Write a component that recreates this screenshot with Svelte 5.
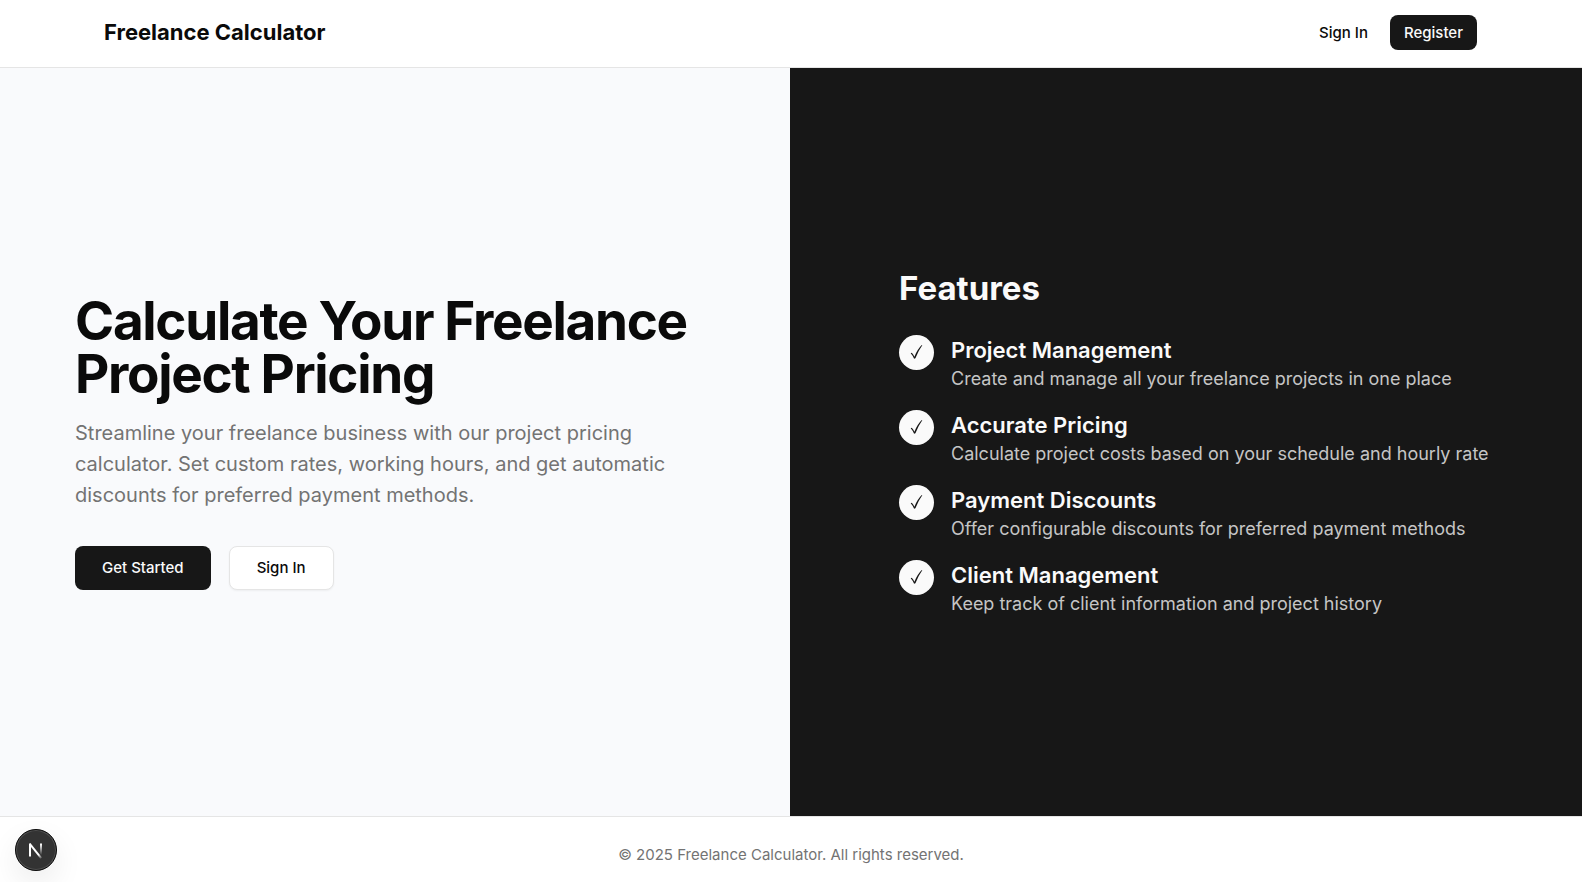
<script>
  const features = [
    { title: 'Project Management', text: 'Create and manage all your freelance projects in one place' },
    { title: 'Accurate Pricing', text: 'Calculate project costs based on your schedule and hourly rate' },
    { title: 'Payment Discounts', text: 'Offer configurable discounts for preferred payment methods' },
    { title: 'Client Management', text: 'Keep track of client information and project history' }
  ];
</script>

<div class="page">
  <header>
    <div class="bar">
      <a class="brand" href="#home">Freelance Calculator</a>
      <nav>
        <a class="btn" href="#signin">Sign In</a>
        <a class="btn primary" href="#register">Register</a>
      </nav>
    </div>
  </header>

  <main>
    <section class="hero">
      <div class="intro">
        <h1>Calculate Your Freelance Project Pricing</h1>
        <p>
          Streamline your freelance business with our project pricing calculator. Set custom rates,
          working hours, and get automatic discounts for preferred payment methods.
        </p>
        <div class="actions">
          <a class="btn large primary" href="#register">Get Started</a>
          <a class="btn large outline" href="#signin">Sign In</a>
        </div>
      </div>
    </section>

    <section class="features">
      <div class="panel">
        <h2>Features</h2>
        <ul>
          {#each features as feature}
            <li>
              <span class="check">
                <svg viewBox="0 0 14 16" aria-hidden="true">
                  <path d="M0.7 9.3 L1.8 8.8 Q3.6 10.6 4.4 12.7 Q7.4 5.2 11.8 1 L12.3 1.3 Q8.4 6.7 5.4 14.3 L4.1 14.8 Q2.8 11.6 0.7 9.3 Z" />
                </svg>
              </span>
              <div>
                <h3>{feature.title}</h3>
                <p>{feature.text}</p>
              </div>
            </li>
          {/each}
        </ul>
      </div>
    </section>
  </main>

  <footer>
    <p>© 2025 Freelance Calculator. All rights reserved.</p>
  </footer>

  <button class="devtools" aria-label="Open Next.js Dev Tools">
    <svg viewBox="0 0 40 40" aria-hidden="true">
      <defs>
        <linearGradient id="diagonal" gradientUnits="userSpaceOnUse" x1="19" y1="20" x2="26" y2="29">
          <stop offset="0.5" stop-color="#fff" />
          <stop offset="1" stop-color="#fff" stop-opacity="0" />
        </linearGradient>
        <linearGradient id="stem" gradientUnits="userSpaceOnUse" x1="25" y1="14" x2="25" y2="25">
          <stop offset="0" stop-color="#fff" />
          <stop offset="1" stop-color="#fff" stop-opacity="0" />
        </linearGradient>
      </defs>
      <path d="M13.8 13.8 L25.2 28.2" fill="none" stroke="url(#diagonal)" stroke-width="2" />
      <path d="M14 26.5 V13.5" fill="none" stroke="#fff" stroke-width="2" />
      <path d="M25 13.5 V25.5" fill="none" stroke="url(#stem)" stroke-width="2" />
    </svg>
  </button>
</div>

<style>
  :global(body) {
    margin: 0;
    background: #fff;
  }

  .page {
    display: flex;
    flex-direction: column;
    min-height: 100vh;
    font-family: Inter, sans-serif;
    color: #0a0a0a;
  }

  h1, h2, h3, p, ul {
    margin: 0;
    padding: 0;
  }

  a {
    color: inherit;
    text-decoration: none;
  }

  header {
    border-bottom: 1px solid #e5e5e5;
  }

  .bar {
    display: flex;
    align-items: center;
    justify-content: space-between;
    box-sizing: border-box;
    max-width: 1408px;
    margin: 0 auto;
    padding: 15px 18px 17px 17px;
  }

  .brand {
    font-size: 22px;
    line-height: 31px;
    font-weight: 700;
  }

  nav {
    display: flex;
    gap: 8px;
  }

  .btn {
    display: flex;
    align-items: center;
    box-sizing: border-box;
    height: 35px;
    padding: 0 14px;
    border-radius: 8px;
    font-size: 15px;
    line-height: 22px;
    font-weight: 500;
    white-space: nowrap;
  }

  .large {
    height: 44px;
    padding: 0 27px;
  }

  .primary {
    background: #171717;
    color: #fafafa;
  }

  .outline {
    border: 1px solid #e5e5e5;
    background: #fff;
    box-shadow: 0 1px 2px rgba(0, 0, 0, 0.05);
  }

  main {
    flex: 1;
    display: grid;
    grid-template-columns: 790fr 792fr;
  }

  .hero {
    display: flex;
    align-items: center;
    padding: 0 75px;
    background: #f9fafc;
  }

  h1 {
    font-size: 53px;
    line-height: 53px;
    font-weight: 700;
    letter-spacing: -0.025em;
  }

  .intro p {
    margin-top: 17px;
    font-size: 20px;
    line-height: 31px;
    color: #737373;
  }

  .actions {
    display: flex;
    gap: 18px;
    margin-top: 35px;
  }

  .features {
    display: flex;
    align-items: center;
    padding-left: 109px;
    background: #171717;
    color: #fafafa;
  }

  h2 {
    font-size: 33px;
    line-height: 40px;
    font-weight: 700;
  }

  ul {
    display: grid;
    gap: 18px;
    margin-top: 27px;
    list-style: none;
  }

  li {
    display: flex;
    gap: 17px;
  }

  .check {
    display: flex;
    align-items: center;
    justify-content: center;
    flex: none;
    width: 35px;
    height: 35px;
    border-radius: 50%;
    background: #fafafa;
  }

  .check svg {
    width: 14px;
    height: 16px;
    fill: #171717;
  }

  h3 {
    font-size: 22px;
    line-height: 31px;
    font-weight: 600;
  }

  li p {
    font-size: 18px;
    line-height: 26px;
    color: #c5c5c5;
  }

  footer {
    padding: 27px 18px 16px;
    border-top: 1px solid #e5e5e5;
    text-align: center;
    font-size: 15px;
    line-height: 22px;
    color: #737373;
  }

  .devtools {
    position: fixed;
    left: 15px;
    bottom: 11px;
    width: 42px;
    height: 42px;
    padding: 0;
    border: 1px solid #0a0a0a;
    border-radius: 50%;
    background: #333;
    box-shadow: inset 0 0 0 1px #505050, 0 12px 30px rgba(0, 0, 0, 0.08);
  }

  .devtools svg {
    display: block;
    width: 40px;
    height: 40px;
  }
</style>
